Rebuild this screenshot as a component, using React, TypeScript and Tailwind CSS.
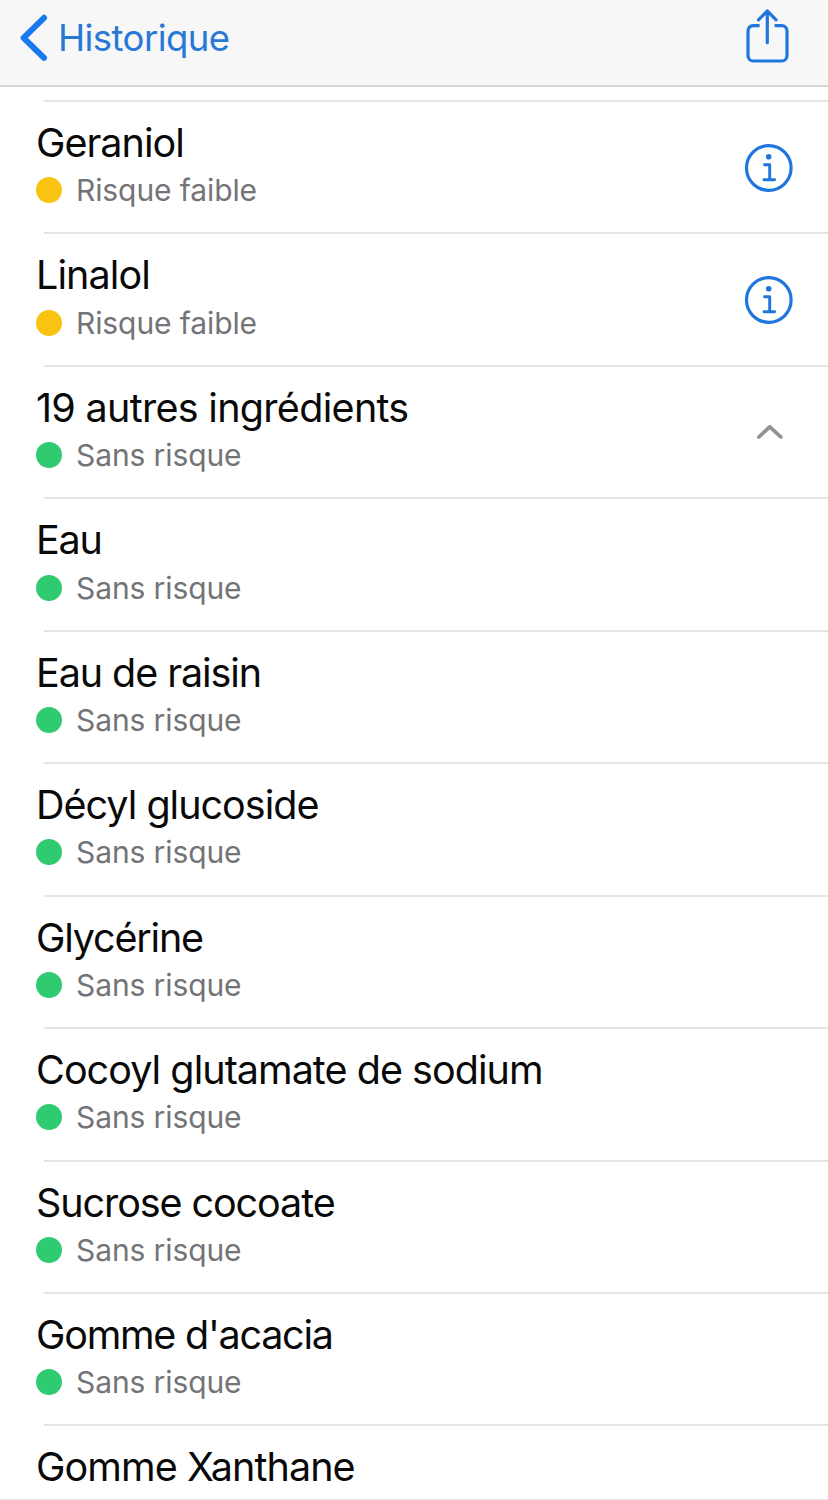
type Risk = 'low' | 'none';

type Ingredient = {
  name: string;
  risk?: Risk;
  action?: 'info' | 'collapse';
  tracking?: string;
};

const ingredients: Ingredient[] = [
  { name: 'Geraniol', risk: 'low', action: 'info' },
  { name: 'Linalol', risk: 'low', action: 'info', tracking: 'tracking-[-0.9px]' },
  { name: '19 autres ingrédients', risk: 'none', action: 'collapse', tracking: 'tracking-[-0.7px]' },
  { name: 'Eau', risk: 'none', tracking: 'tracking-[-1.2px]' },
  { name: 'Eau de raisin', risk: 'none', tracking: 'tracking-[-1.08px]' },
  { name: 'Décyl glucoside', risk: 'none', tracking: 'tracking-[-1px]' },
  { name: 'Glycérine', risk: 'none', tracking: 'tracking-[-1.2px]' },
  { name: 'Cocoyl glutamate de sodium', risk: 'none', tracking: 'tracking-[-0.96px]' },
  { name: 'Sucrose cocoate', risk: 'none', tracking: 'tracking-[-1.08px]' },
  { name: "Gomme d'acacia", risk: 'none', tracking: 'tracking-[-1.25px]' },
  { name: 'Gomme Xanthane', tracking: 'tracking-[-0.92px]' },
];

function InfoIcon() {
  return (
    <svg className="mt-[43px] h-[50px] w-[50px] text-[#1f76dc]" viewBox="0 0 50 50" fill="none" stroke="currentColor">
      <circle cx="24.8" cy="25" r="22.3" strokeWidth="3.2" />
      <circle cx="24.7" cy="13.7" r="2.8" fill="currentColor" stroke="none" />
      <path d="M20.5 21.7h5.2v14.8M20 36.7h10.6" strokeWidth="2.9" strokeLinecap="round" strokeLinejoin="round" />
    </svg>
  );
}

function ShareIcon() {
  return (
    <svg
      className="mr-[39px] mt-2 h-14 w-[45px] text-[#1f76dc]"
      viewBox="0 0 45 56"
      fill="none"
      stroke="currentColor"
      strokeWidth="3.2"
    >
      <path d="M15.6 17.7H9.2a5.2 5.2 0 0 0-5.2 5.2v24.9a5.2 5.2 0 0 0 5.2 5.2h28.6a5.2 5.2 0 0 0 5.2-5.2V22.9a5.2 5.2 0 0 0-5.2-5.2H30.6" />
      <path d="M23.3 34.7V3M14.5 11.8L23.3 3l8.8 8.8" strokeLinecap="round" strokeLinejoin="round" />
    </svg>
  );
}

export default function App() {
  return (
    <div className="flex h-[1500px] w-[828px] flex-col overflow-hidden border-b border-[#e9e9e9] bg-white font-[Inter,sans-serif]">
      <header className="flex h-[87px] shrink-0 items-start justify-between border-b-2 border-[#d6d6d7] bg-[#f7f7f7]">
        <button className="flex pl-5 pt-3.5">
          <svg
            className="h-12 w-7 text-[#197aef]"
            viewBox="0 0 28 48"
            fill="none"
            stroke="currentColor"
            strokeWidth="6"
            strokeLinecap="round"
            strokeLinejoin="round"
          >
            <path d="M24 3.8L3.6 23.8L24 43.8" />
          </svg>
          <span className="ml-2.5 text-[36.5px] leading-12 tracking-[-0.55px] text-[#2878d6]">Historique</span>
        </button>
        <ShareIcon />
      </header>
      <main className="pt-[13px]">
        {ingredients.map((item) => (
          <div
            key={item.name}
            className={`relative flex items-start justify-between pl-9 pr-[34px] ${item.risk ? 'h-[132.45px]' : 'h-[74px]'}`}
          >
            <hr className="absolute left-11 right-0 top-0 border-t-2 border-[#e5e5e6]" />
            <div className="pt-5">
              <h2 className={`text-[39.5px] leading-[46px] whitespace-nowrap text-[#090909] ${item.tracking ?? 'tracking-[-1px]'}`}>
                {item.name}
              </h2>
              {item.risk && (
                <p className="flex items-center pt-[1.3px] text-[30px] leading-[46px] tracking-[-0.1px] text-[#737378]">
                  <span
                    className={`mr-3.5 h-[26px] w-[26px] rounded-full ${item.risk === 'low' ? 'bg-[#f8c311]' : 'bg-[#30cb70]'}`}
                  />
                  {item.risk === 'low' ? 'Risque faible' : 'Sans risque'}
                </p>
              )}
            </div>
            {item.action === 'info' && <InfoIcon />}
            {item.action === 'collapse' && (
              <svg
                className="mr-2.5 mt-[57px] h-5 w-7"
                viewBox="0 0 28 20"
                fill="none"
                stroke="#929294"
                strokeWidth="3.7"
                strokeLinecap="round"
                strokeLinejoin="round"
              >
                <path d="M2.8 15L13.8 4.8l11 10.2" />
              </svg>
            )}
          </div>
        ))}
      </main>
    </div>
  );
}
